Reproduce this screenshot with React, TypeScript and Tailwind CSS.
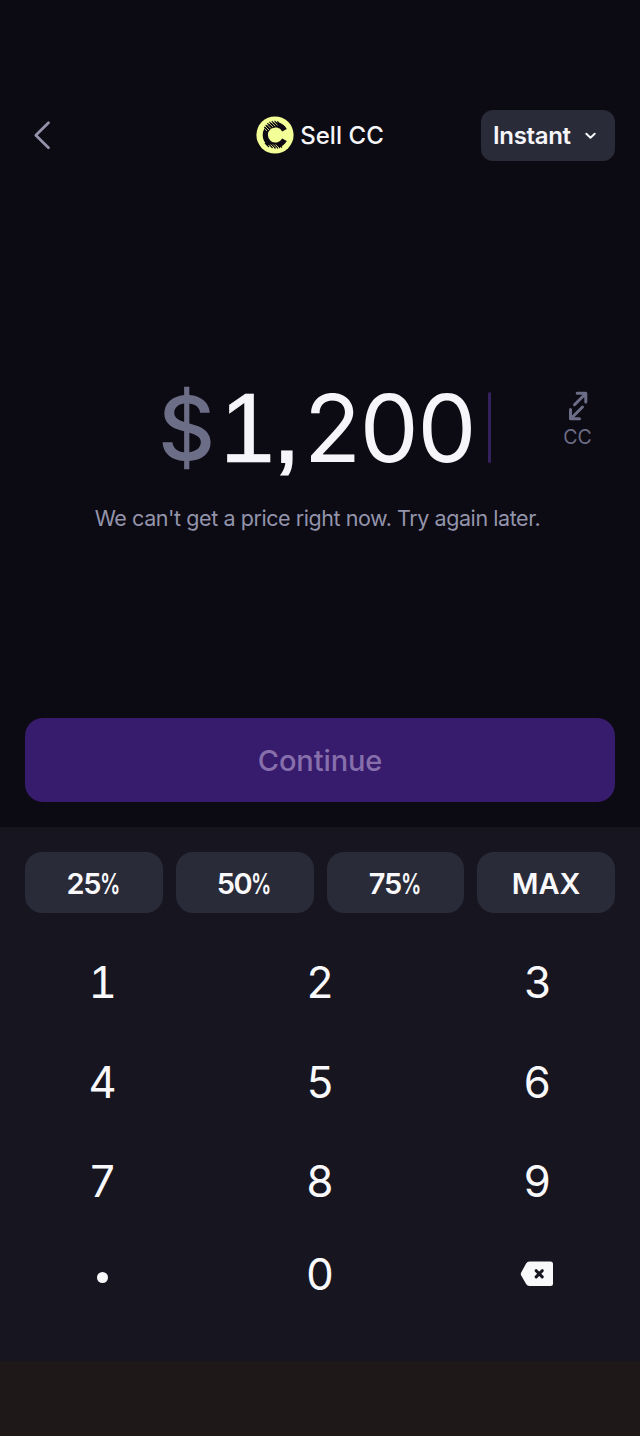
import React from "react";

function CoinLogo() {
  return (
    <svg width="38" height="38" viewBox="0 0 38 38" aria-hidden="true">
      <circle cx="19" cy="19" r="18.6" fill="#f3ff97" />
      <path d="M28.500 14.200A10.200 10.200 0 1 0 28.500 23.800" fill="none" stroke="#0d0a14" strokeWidth="5.200" />
      <path
        d="M8.200 10.800L12 14.600M9.600 8.800L14 13.200M11.300 7.100L16 11.800M13.400 5.900L18.200 10.700M15.800 5.100L20.800 10.100M18.500 4.900L23 9.400M21.300 5.400L24.500 8.600M9 27L13 31M11.500 27L16.500 32M14 27L19.500 32.500M16.800 27.300L22 32.500M19.500 27.500L24 32M22 27.500L26 31.500"
        stroke="#0d0a14"
        strokeWidth="1.150"
      />
      <path
        d="M8.600 12.600L11 15M9 10L13 14M10.500 8L15 12.500M12.400 6.500L17 11.100M14.600 5.500L19.400 10.300M17.100 4.900L21.500 9.300M12.500 29L15 31.500M14.500 28.500L18 32M17 28.500L21 32.500M19.500 28.500L23.200 32.200"
        stroke="#f3ff97"
        strokeWidth="0.800"
      />
    </svg>
  );
}

function Header() {
  return (
    <header className="grid h-[51px] grid-cols-[1fr_auto_1fr] items-center">
      <button className="flex h-[51px] w-[51px] items-center" aria-label="Back">
        <svg width="34" height="34" viewBox="0 0 34 34" fill="none">
          <path d="M23.500 4.800L10.800 17.300L23.500 29.800" stroke="#9394ab" strokeWidth="2.700" strokeLinecap="round" strokeLinejoin="round" />
        </svg>
      </button>
      <div className="flex items-center gap-[6px]">
        <CoinLogo />
        <h1 className="pt-px text-[24px] leading-[32px] font-[550] tracking-[0.050px] text-[#f6f6fa]">Sell CC</h1>
      </div>
      <button className="flex h-[51px] w-[134px] items-center justify-between justify-self-end rounded-[12px] bg-[#2a2b38] pr-[18px] pl-[12px] text-[#f6f6fa]">
        <span className="pt-px text-[24px] leading-[32px] font-[560] tracking-[-0.350px]">Instant</span>
        <svg width="13" height="13" viewBox="0 0 13 13" fill="none">
          <path d="M2.300 4.800L6.500 8.800L10.700 4.800" stroke="currentColor" strokeWidth="2" strokeLinecap="round" strokeLinejoin="round" />
        </svg>
      </button>
    </header>
  );
}

function Amount() {
  return (
    <div className="grid h-[100px] grid-cols-[133px_1fr_75px]">
      <span />
      <div className="flex h-[100px] items-center text-[93.500px] leading-[100px]">
        <span className="w-[62px] text-[88.500px] font-[450] tracking-[-2px] text-[#6c6d86]">$</span>
        <div className="flex w-[268px] text-[#f6f6fa]">
          <span className="w-[53px] font-['Liberation_Sans',sans-serif] text-[98.500px] [-webkit-text-stroke:0.6px_#f6f6fa]">1</span>
          <span className="w-[31px] font-['Liberation_Sans',sans-serif] text-[98.500px] [-webkit-text-stroke:2px_#f6f6fa]">,</span>
          <span className="font-[430] tracking-[-1.200px]">200</span>
        </div>
        <span className="h-[71px] w-[3px] rounded-full bg-[#36215f]" />
      </div>
      <button className="flex flex-col items-center pt-[12px] text-[#6c6d86]">
        <svg width="34" height="32" viewBox="0 0 34 32" fill="none" stroke="currentColor" strokeWidth="3" strokeLinecap="round" strokeLinejoin="round">
          <path d="M13.500 14.700L24.500 3.700M16.200 3.200H24.800V12" />
          <path d="M21.500 17L10 28.500M9.500 19.500V28.800H18.500" />
        </svg>
        <span className="mt-[2px] text-[19.500px] leading-[26px]">CC</span>
      </button>
    </div>
  );
}

const shares = ["25", "50", "75"];
const digits = ["1", "2", "3", "4", "5", "6", "7", "8", "9"];
const chip = "h-[61px] rounded-[17px] bg-[#2a2b38] pt-[2px] text-[29px] font-[560]";

function Keypad() {
  return (
    <section className="h-[534px] bg-[#171520] px-[25px] pt-[25px] text-[#f9f9fc]">
      <div className="grid grid-cols-4 gap-[13px]">
        {shares.map((s) => (
          <button key={s} className={chip}>
            <span className="tracking-[-1.300px]">{s}</span>
            <span className="mr-[-8px] inline-block origin-left scale-x-[0.700]">%</span>
          </button>
        ))}
        <button className={chip}>MAX</button>
      </div>
      <div className="mt-[20px] grid auto-rows-[99.500px] grid-cols-3 gap-x-[62px] text-[43.500px]">
        {digits.map((d) => (
          <button
            key={d}
            className={
              d === "1"
                ? "flex items-center justify-center font-['Liberation_Sans',sans-serif] text-[46px] leading-[99px]"
                : "flex items-center justify-center leading-[99px]"
            }
          >
            {d}
          </button>
        ))}
      </div>
      <div className="grid h-[85px] grid-cols-3 gap-x-[62px] text-[43.500px]">
        <button className="flex items-center justify-center pt-[6px]" aria-label="Decimal point">
          <span className="h-[11px] w-[11px] rounded-full bg-[#f9f9fc]" />
        </button>
        <button className="flex items-center justify-center leading-[84px]">0</button>
        <button className="flex items-center justify-center" aria-label="Delete">
          <svg width="34" height="26" viewBox="0 0 34 26">
            <path d="M9.500 0.500H30.500a2.500 2.500 0 0 1 2.500 2.500V22.500a2.500 2.500 0 0 1-2.500 2.500H9.500a4 4 0 0 1-3.400-2L1.200 14.500a3 3 0 0 1 0-3L6.100 2.500a4 4 0 0 1 3.400-2Z" fill="#f9f9fc" />
            <path d="M16.200 9.700L22.200 15.900M22.200 9.700L16.200 15.900" stroke="#171520" strokeWidth="3" strokeLinecap="round" />
          </svg>
        </button>
      </div>
    </section>
  );
}

export default function App() {
  return (
    <main className="flex h-[1436px] w-[640px] flex-col overflow-hidden bg-[#0c0a12] font-['Inter',sans-serif]">
      <div className="h-[827px] px-[25px] pt-[109.500px]">
        <Header />
        <div className="mt-[217px]">
          <Amount />
        </div>
        <p className="mt-[24.500px] pr-[5px] text-center text-[21.500px] leading-[32px] tracking-[-0.430px] whitespace-nowrap text-[#9394ab]">
          We can't get a price right now. Try again later.
        </p>
        <button className="mt-[183.500px] flex h-[84px] w-full items-center justify-center rounded-[18px] bg-[#371b6d] pt-[2px] text-[29px] font-medium tracking-[-0.100px] text-[#876fac]">
          Continue
        </button>
      </div>
      <Keypad />
      <footer className="h-[75px] bg-[#1e1819]" />
    </main>
  );
}
